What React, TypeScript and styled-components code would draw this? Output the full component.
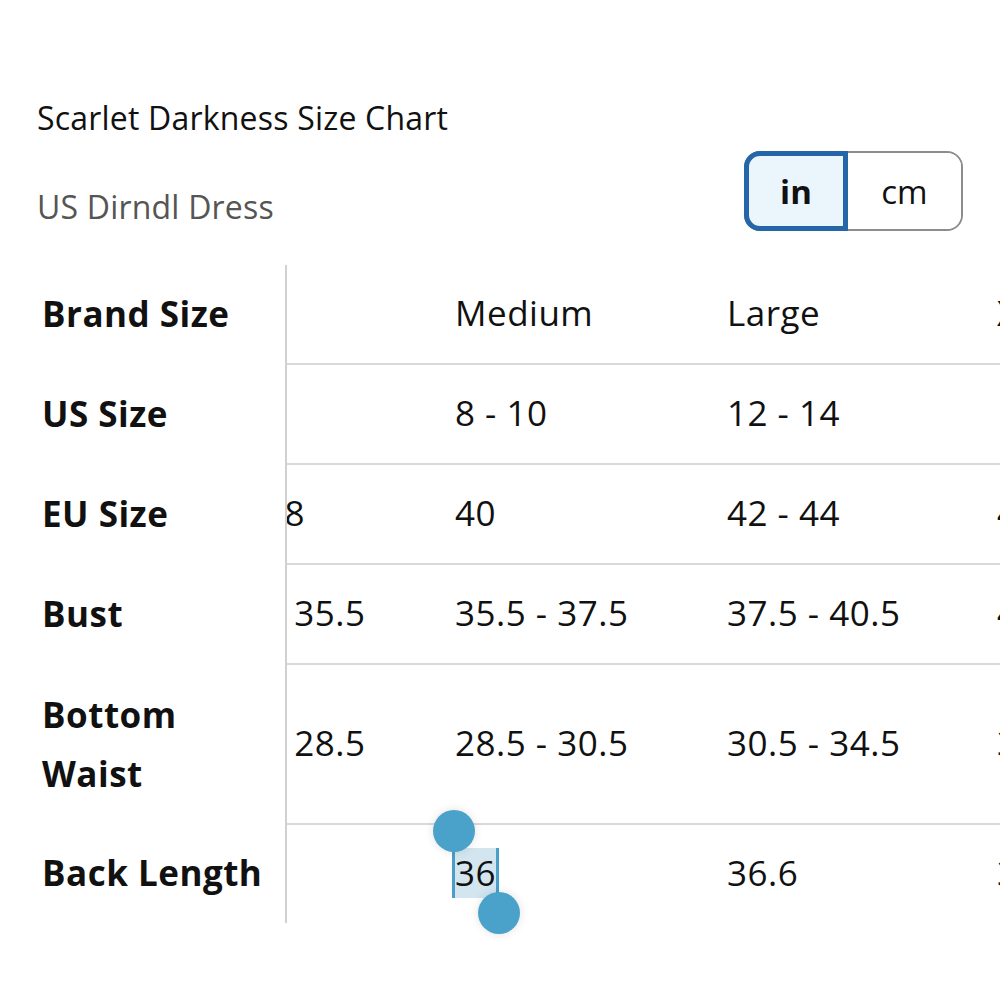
import React, { useLayoutEffect, useRef } from "react";
import styled, { createGlobalStyle } from "styled-components";

const GlobalStyle = createGlobalStyle`
  html, body {
    margin: 0;
    padding: 0;
    background: #ffffff;
    overflow: hidden;
  }
  body {
    font-family: "Open Sans", "Noto Sans", sans-serif;
    color: #111111;
  }
`;

type Column = { width: number; values: string[] };

const labels = [
  { text: "Brand Size", h: 100 },
  { text: "US Size", h: 100 },
  { text: "EU Size", h: 100 },
  { text: "Bust", h: 100 },
  { text: "Bottom Waist", h: 160 },
  { text: "Back Length", h: 98 },
];

const columns: Column[] = [
  { width: 263, values: ["Small", "4 - 6", "36 - 38", "33.5 - 35.5", "26.5 - 28.5", "35.4"] },
  { width: 272, values: ["Medium", "8 - 10", "40", "35.5 - 37.5", "28.5 - 30.5", "36"] },
  { width: 270, values: ["Large", "12 - 14", "42 - 44", "37.5 - 40.5", "30.5 - 34.5", "36.6"] },
  { width: 272, values: ["X-Large", "16 - 18", "46 - 48", "40.5 - 44", "34.5 - 38.5", "37.2"] },
];

const App = () => {
  const scrollRef = useRef<HTMLDivElement>(null);

  // table is scrolled a bit to the right in the screenshot
  useLayoutEffect(() => {
    if (scrollRef.current) scrollRef.current.scrollLeft = 105;
  }, []);

  return (
    <Page>
      <GlobalStyle />
      <Title>Scarlet Darkness Size Chart</Title>
      <SubHeader>
        <Subtitle>US Dirndl Dress</Subtitle>
        <Toggle>
          <Segment active>in</Segment>
          <Segment>cm</Segment>
        </Toggle>
      </SubHeader>

      <Chart>
        <LabelColumn>
          {labels.map((l) => (
            <LabelCell key={l.text} h={l.h}>
              {l.text === "Bottom Waist" ? (
                <>
                  Bottom
                  <br />
                  Waist
                </>
              ) : (
                l.text
              )}
            </LabelCell>
          ))}
        </LabelColumn>
        <ScrollArea ref={scrollRef}>
          <ScrollContent>
            {columns.map((col, ci) => (
              <ValueColumn key={ci} w={col.width}>
                {col.values.map((v, ri) => (
                  <ValueCell key={ri} h={labels[ri].h} last={ri === labels.length - 1}>
                    {ci === 1 && ri === 5 ? (
                      <Selection>
                        <Handle top />
                        {v}
                        <Handle />
                      </Selection>
                    ) : (
                      v
                    )}
                  </ValueCell>
                ))}
              </ValueColumn>
            ))}
          </ScrollContent>
        </ScrollArea>
      </Chart>
    </Page>
  );
};

export default App;

const Page = styled.div`
  width: 1000px;
  height: 1000px;
  overflow: hidden;
  padding-top: 96px;
  box-sizing: border-box;
`;

const Title = styled.h1`
  margin: 0 0 0 37px;
  font-size: 32px;
  font-weight: 400;
  letter-spacing: 0.2px;
  line-height: 44px;
  color: #111111;
`;

const SubHeader = styled.div`
  display: flex;
  align-items: flex-start;
  justify-content: space-between;
  margin-top: 11px;
  padding: 0 37px 0 37px;
`;

const Subtitle = styled.div`
  font-size: 32px;
  letter-spacing: 0.2px;
  line-height: 44px;
  color: #555555;
  margin-top: 34px;
`;

const Toggle = styled.div`
  display: flex;
  width: 219px;
  height: 80px;
  border: 2px solid #8c8c8c;
  border-radius: 16px;
  box-sizing: border-box;
  background: #ffffff;
`;

const Segment = styled.div<{ active?: boolean }>`
  flex: ${(p) => (p.active ? "0 0 104px" : "1")};
  box-sizing: border-box;
  display: flex;
  align-items: center;
  justify-content: center;
  font-size: 33px;
  font-weight: ${(p) => (p.active ? 700 : 400)};
  color: #111111;
  background: ${(p) => (p.active ? "#eaf5fc" : "#ffffff")};
  border: ${(p) => (p.active ? "5px solid #2566a8" : "none")};
  border-radius: ${(p) => (p.active ? "16px 0 0 16px" : "0 14px 14px 0")};
  margin: ${(p) => (p.active ? "-2px 0 -2px -2px" : "0")};
`;

const Chart = styled.div`
  display: flex;
  margin-top: 34px;
`;

const LabelColumn = styled.div`
  flex: 0 0 285px;
  border-right: 2px solid #d0d0d0;
  display: flex;
  flex-direction: column;
  align-self: flex-start;
`;

const LabelCell = styled.div<{ h: number }>`
  height: ${(p) => p.h}px;
  box-sizing: border-box;
  display: flex;
  align-items: center;
  padding: 0 0 3px 42px;
  font-size: 35px;
  font-weight: 700;
  letter-spacing: 0.5px;
  line-height: 59px;
  color: #111111;
`;

const ScrollArea = styled.div`
  flex: 1;
  overflow-x: auto;
  overflow-y: hidden;
  scrollbar-width: none;
  &::-webkit-scrollbar {
    display: none;
  }
`;

const ScrollContent = styled.div`
  display: flex;
  width: max-content;
  padding-bottom: 24px;
`;

const ValueColumn = styled.div<{ w: number }>`
  width: ${(p) => p.w}px;
  display: flex;
  flex-direction: column;
`;

const ValueCell = styled.div<{ h: number; last?: boolean }>`
  height: ${(p) => p.h}px;
  box-sizing: border-box;
  display: flex;
  align-items: center;
  padding: 0 0 3px 10px;
  font-size: 35px;
  letter-spacing: 0.5px;
  color: #111111;
  white-space: nowrap;
  border-bottom: ${(p) => (p.last ? "none" : "2px solid #d9d9d9")};
`;

const Selection = styled.span`
  position: relative;
  background: #d3e6f0;
  box-shadow: -3px 0 0 #4a9fc8, 3px 0 0 #4a9fc8;
  line-height: 50px;
`;

const Handle = styled.span<{ top?: boolean }>`
  position: absolute;
  width: 42px;
  height: 42px;
  border-radius: 50%;
  background: #4aa2ca;
  box-shadow: 0 0 10px rgba(0, 0, 0, 0.12);
  ${(p) => (p.top ? "left: -22px; top: -38px;" : "right: -24px; bottom: -36px;")}
`;
